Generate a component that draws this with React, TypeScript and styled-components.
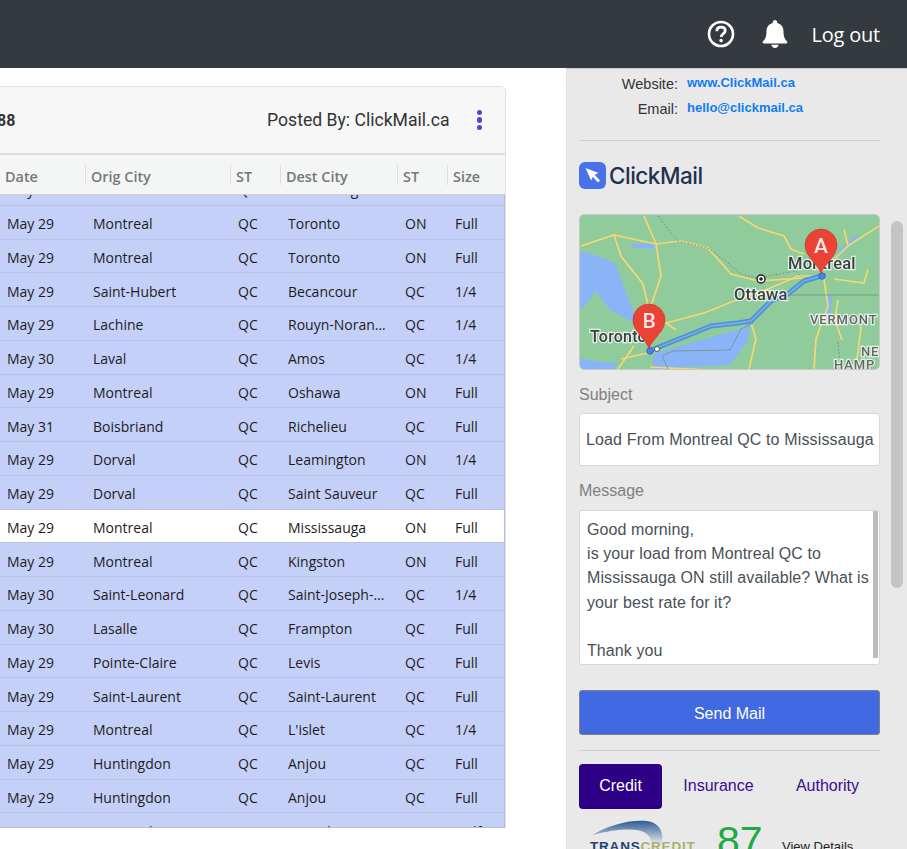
import React from 'react';
import styled, { createGlobalStyle } from 'styled-components';

const Global = createGlobalStyle`
  html, body { margin: 0; padding: 0; background: #fff; overflow: hidden; height: 849px; }
  * { box-sizing: border-box; }
`;
const Page = styled.div`
  width: 907px; height: 849px; overflow: hidden; display: flex; flex-direction: column;
  font-family: Roboto, "Noto Sans", sans-serif;
`;
const TopBar = styled.header`
  height: 68px; flex: none; background: #343a40; display: flex; align-items: center; justify-content: flex-end;
  padding-right: 27px; color: #fff;
`;
const IconSlot = styled.div<{ $gap: number }>`
  display: flex; margin-right: ${p => p.$gap}px;
`;
const LogOut = styled.span`
  font: 400 20px "Open Sans", sans-serif; letter-spacing: -0.2px;
`;
const Body = styled.div`
  flex: 1; display: flex; min-height: 0;
`;
const Main = styled.main`
  width: 566px; flex: none; overflow: hidden; padding-top: 18px;
`;
const Card = styled.section`
  width: 506px; height: 742px; display: flex; flex-direction: column; overflow: hidden;
  border: 1px solid #dfe1ee; border-left: none; border-bottom: none; border-radius: 0 6px 0 0;
`;
const CardHead = styled.div`
  height: 68px; flex: none; background: #f7f7f7; display: flex; align-items: center; justify-content: space-between;
  border-bottom: 2px solid #dcdcdc; padding-right: 23px;
`;
const LoadNo = styled.b`
  font: 700 16px Roboto, sans-serif; color: #333; margin-left: -3px;
`;
const Posted = styled.div`
  display: flex; align-items: center; gap: 27px; font-size: 17.6px; color: #333;
`;
const Dots = styled.span`
  display: flex; flex-direction: column; gap: 2px;
  i { width: 5.5px; height: 5.5px; background: #5b3fd6; border-radius: 50%; display: block; }
`;
const Grid = `display: grid; grid-template-columns: 85px 145px 50px 117px 50px 1fr;`;
const HeadRow = styled.div`
  ${Grid}
  height: 40px; flex: none; background: #f4f6f5; border-bottom: 1px solid #cfd2d3; align-items: center;
  font: 600 14.4px "Open Sans", sans-serif; color: #777;
`;
const HeadCell = styled.div`
  height: 20px; line-height: 24px; padding-left: 5px; border-left: 1px solid #dcdedd; white-space: nowrap;
  &:first-child { border-left: none; }
`;
const Rows = styled.div`
  flex: 1; overflow: hidden; border-right: 1px solid #b5bcd0; border-bottom: 1px solid #b5bcd0;
`;
const RowList = styled.div`
  margin-top: -23px;
`;
const Row = styled.div<{ $on?: boolean }>`
  ${Grid}
  height: 33.75px; align-items: center; background: ${p => (p.$on ? '#ffffff' : '#c5d0f9')};
  border-bottom: 1px solid #b9c3e4;
  font: 400 14px "Open Sans", sans-serif; color: #1c1c1c;
`;
const Cell = styled.div`
  padding: 3px 8px 0 8px; white-space: nowrap; overflow: hidden; text-overflow: ellipsis;
  &:first-child { padding-left: 7px; }
`;
const Side = styled.aside`
  position: relative; flex: 1; background: #e9e9e9; overflow: hidden; padding: 0 27px 0 12px;
  border-top: 1px solid #c9c9c9; border-left: 1px solid #e4e4e4; font-family: "Liberation Sans", Arial, sans-serif;
`;
const Contact = styled.div`
  display: grid; grid-template-columns: 99px 1fr; column-gap: 9px; row-gap: 7px; padding-top: 6px; height: 72px;
  border-bottom: 1px solid #d2d2d2; align-content: start;
`;
const CLabel = styled.div`
  font-size: 14.5px; line-height: 18px; text-align: right; color: #333;
`;
const CLink = styled.a`
  font-size: 13px; font-weight: 700; line-height: 16px; color: #0f7cf4;
`;
const Brand = styled.div`
  display: flex; align-items: center; height: 73px; gap: 3px; padding-bottom: 5px;
`;
const BrandName = styled.span`
  font: 500 22.5px Inter, Roboto, sans-serif; color: #22304f; letter-spacing: -0.5px;
`;
const MapBox = styled.div`
  height: 156px; border: 1px solid #c8c8c8; border-radius: 5px; overflow: hidden;
  svg { display: block; filter: blur(0.45px); }
`;
const FieldLabel = styled.label<{ $top: number; $bottom: number }>`
  display: block; font-size: 16px; line-height: 18px; color: #808080;
  margin: ${p => p.$top}px 0 ${p => p.$bottom}px;
`;
const Subject = styled.div`
  height: 53px; background: #fff; border: 1px solid #d9d9d9; border-radius: 3px; display: flex; align-items: center;
  padding-left: 6px; font-size: 16px; letter-spacing: 0.14px; color: #495057; white-space: nowrap; overflow: hidden;
`;
const Message = styled.div`
  position: relative; height: 155px; background: #fff; border: 1px solid #d9d9d9; border-radius: 3px; padding: 7px 7px;
  font-size: 16px; letter-spacing: 0.09px; line-height: 24.2px; color: #495057; overflow: hidden;
`;
const MsgScroll = styled.div`
  position: absolute; right: 1px; top: 0; width: 5px; height: 147px; background: #bdbdbd;
`;
const Send = styled.button`
  display: block; width: 100%; height: 45px; margin-top: 25px; padding: 2px 0 0; background: #4169e1; color: #fff; border: 1px solid #808080;
  border-radius: 3px; font: 400 16px "Liberation Sans", Arial, sans-serif;
`;
const Rule = styled.hr`
  border: 0; border-top: 1px solid #d2d2d2; margin: 15px 0 13px;
`;
const Tabs = styled.div`
  display: grid; grid-template-columns: 83px 113px 1fr;
`;
const Tab = styled.div<{ $on?: boolean }>`
  height: 45px; padding-bottom: 2px; border-radius: 4px; display: flex; align-items: center; justify-content: center; font-size: 16px;
  background: ${p => (p.$on ? '#2e0085' : 'transparent')}; color: ${p => (p.$on ? '#fff' : '#3d0a94')};
`;
const Scores = styled.div`
  display: flex; align-items: flex-start; margin-top: 11px; height: 60px;
`;
const Score = styled.div`
  font-size: 41px; line-height: 45px; color: #22a845; margin: -1px 0 0 18px; width: 65px;
`;
const Details = styled.div`
  font-size: 13px; margin-top: 19px; color: #222;
`;
const Thumb = styled.div`
  position: absolute; right: 4px; top: 152px; width: 12px; height: 367px; background: #c4c4c4; border-radius: 6px;
`;

const rows: [string, string, string, string, string, string, boolean?][] = [
  ['May 29', 'Montreal', 'QC', 'Mississauga', 'ON', '1/4'],
  ['May 29', 'Montreal', 'QC', 'Toronto', 'ON', 'Full'],
  ['May 29', 'Montreal', 'QC', 'Toronto', 'ON', 'Full'],
  ['May 29', 'Saint-Hubert', 'QC', 'Becancour', 'QC', '1/4'],
  ['May 29', 'Lachine', 'QC', 'Rouyn-Noranda', 'QC', '1/4'],
  ['May 30', 'Laval', 'QC', 'Amos', 'QC', '1/4'],
  ['May 29', 'Montreal', 'QC', 'Oshawa', 'ON', 'Full'],
  ['May 31', 'Boisbriand', 'QC', 'Richelieu', 'QC', 'Full'],
  ['May 29', 'Dorval', 'QC', 'Leamington', 'ON', '1/4'],
  ['May 29', 'Dorval', 'QC', 'Saint Sauveur', 'QC', 'Full'],
  ['May 29', 'Montreal', 'QC', 'Mississauga', 'ON', 'Full', true],
  ['May 29', 'Montreal', 'QC', 'Kingston', 'ON', 'Full'],
  ['May 30', 'Saint-Leonard', 'QC', 'Saint-Joseph-de-Beauce', 'QC', '1/4'],
  ['May 30', 'Lasalle', 'QC', 'Frampton', 'QC', 'Full'],
  ['May 29', 'Pointe-Claire', 'QC', 'Levis', 'QC', 'Full'],
  ['May 29', 'Saint-Laurent', 'QC', 'Saint-Laurent', 'QC', 'Full'],
  ['May 29', 'Montreal', 'QC', "L'islet", 'QC', '1/4'],
  ['May 29', 'Huntingdon', 'QC', 'Anjou', 'QC', 'Full'],
  ['May 29', 'Huntingdon', 'QC', 'Anjou', 'QC', 'Full'],
  ['May 30', 'Montreal', 'QC', 'Dorval', 'ON', 'Half'],
];

const Help = () => (
  <svg width="28" height="28" viewBox="0 0 28 28" fill="none">
    <circle cx="14" cy="14" r="12" stroke="#fff" strokeWidth="2.6" />
    <path d="M9.8 11.2c0-2.6 1.9-4 4.3-4s4.1 1.4 4.1 3.6c0 3.3-4 3-4 6.2" stroke="#fff" strokeWidth="2.8" />
    <circle cx="14.1" cy="20.6" r="1.8" fill="#fff" />
  </svg>
);
const Bell = () => (
  <svg width="26" height="28" viewBox="0 0 26 28">
    <path fill="#fff" d="M13 0c-1.3 0-2.2 1-2.2 2.2v.9C6.600 4 4.500 7.500 4.500 11.500c0 5.500-1.500 7.800-3.500 9.800-.8.800-.3 2.200 1 2.200h22c1.300 0 1.800-1.400 1-2.200-2-2-3.500-4.300-3.500-9.800 0-4-2.100-7.500-6.300-8.400v-.9C15.200 1 14.300 0 13 0z" />
    <path fill="#fff" d="M9.500 24.800h7C16.500 26.700 15 28 13 28s-3.500-1.300-3.500-3.200z" />
  </svg>
);
const Logo = () => (
  <svg width="27" height="27" viewBox="0 0 27 27">
    <rect width="27" height="27" rx="6" fill="#4a72e8" />
    <path d="M6.500 6l13 5-5 2.200-2.400 5.300z" fill="#fff" />
    <path d="M13.500 12.500l6.500 7" stroke="#fff" strokeWidth="2.600" />
  </svg>
);
const Pin = ({ x, y, l }: { x: number; y: number; l: string }) => (
  <g transform={`translate(${x} ${y})`}>
    <path d="M0 0c-2-9-16-17-16-29a16 16 0 0 1 32 0C16-17 2-9 0 0z" fill="#ea4335" stroke="#c5362c" strokeWidth="0.6" />
    <text x="0" y="-21" textAnchor="middle" fontFamily="Roboto, sans-serif" fontSize="21" fontWeight="500" fill="#fde8e4">{l}</text>
  </g>
);
const Label = ({ x, y, t, s = 16.5, f = '#3c4043', ls = 0.2 }: { x: number; y: number; t: string; s?: number; f?: string; ls?: number }) => (
  <text x={x} y={y} fontFamily="Roboto, sans-serif" fontSize={s} fontWeight="500" fill={f} stroke="#fff" strokeWidth="2.5" strokeOpacity="0.75" paintOrder="stroke" letterSpacing={ls}>{t}</text>
);
const roads = [
  'M1 31L34 20 76 29 101 26 128 33 151 59 178 66',
  'M34 20L41 41 63 69 69 94',
  'M76 29L81 61 71 91',
  'M64 1L76 29',
  'M159 1L178 13 204 21 211 34 224 39',
  'M264 14L268 31 299 11',
  'M268 31L240 58',
  'M86 108L124 98 154 86 188 74 218 61 241 61',
  'M244 64L248 91 236 124 234 154',
  'M254 64L284 68 288 54',
  'M258 85L255 105 262 125',
  'M171 108L176 124 169 154',
  'M68 138L41 144',
  'M54 131L38 154',
  'M281 111L278 138 274 154',
  'M178 66L224 63',
  'M70 152L130 155',
  'M69 94L80 120',
  'M96 115L86 108 74 112',
];
const MapArt = () => (
  <svg width="300" height="155" viewBox="0 0 300 155">
    <rect width="300" height="155" fill="#8fcb9b" />
    <path d="M0 36l15 4 20 8 10 27 10 25 0 8-25-13-15-20-5 10-10 10z" fill="#8ab4f8" />
    <path d="M0 143l14 3 24 2-6 7H0z" fill="#8ab4f8" />
    <path d="M75 138L160 114l10-6-2 17-18 25-60 3-10 2-8-5z" fill="#8ab4f8" />
    <path d="M51 28l23 1 0 5-20-1z" fill="#8ab4f8" />
    <path d="M258 38l20-17" stroke="#8ab4f8" strokeWidth="3" fill="none" />
    <path d="M250 81l-2 23" stroke="#8ab4f8" strokeWidth="4" fill="none" />
    {roads.map((d, i) => <path key={i} d={d} stroke="#f6d773" strokeWidth="1.700" fill="none" />)}
    <path d="M78 1L98 26 128 33 148 48 161 59 178 63M182 62l34-6 6 6M258 127l3 27" stroke="#6b7d75" strokeWidth="0.800" strokeDasharray="1.500 2" fill="none" />
    <path d="M211 80h88M173 108l-12 6-11 21-57 1-11 5 6 13" stroke="#7b8a8a" strokeWidth="0.800" fill="none" />
    <path d="M241 61L224 66 208 79 191 86 171 106 158 108 131 111 104 122 69 136" stroke="#4d90d8" strokeWidth="5" fill="none" strokeLinejoin="round" />
    <path d="M241 61L224 66 208 79 191 86 171 106 158 108 131 111 104 122 69 136" stroke="#74aee8" strokeWidth="1.800" fill="none" />
    <circle cx="181" cy="64" r="4" fill="#fff" stroke="#222" strokeWidth="1.500" /><circle cx="181" cy="64" r="1.800" fill="#222" />
    <circle cx="77" cy="134" r="2.500" fill="#fff" stroke="#555" />
    <Label x={154} y={85} t="Ottawa" />
    <Label x={208} y={54} t="Montreal" />
    <Label x={10} y={127} t="Toronto" s={16} />
    <Label x={230} y={109} t="VERMONT" s={13} f="#666" ls={0.9} />
    <Label x={281} y={141} t="NE" s={13} f="#666" ls={0.9} />
    <Label x={254} y={154} t="HAMP" s={13} f="#666" ls={0.9} />
    <circle cx="242" cy="61" r="3.200" fill="#4285f4" stroke="#2a6ac0" />
    <circle cx="70" cy="136" r="3.200" fill="#4285f4" stroke="#2a6ac0" />
    <Pin x={241} y={59} l="A" />
    <Pin x={69} y={134} l="B" />
  </svg>
);
const TransCredit = () => (
  <svg width="120" height="30" viewBox="0 0 120 30">
    <defs>
      <linearGradient id="sw" x1="0" x2="0" y1="0" y2="1"><stop offset="0" stopColor="#2d5a94" /><stop offset="1" stopColor="#dfe4e8" /></linearGradient>
    </defs>
    <path d="M13 15C28 6 50-1 68 1c12 2 17 10 15 22H72C72 8 50 6 13 15z" fill="url(#sw)" />
    <text x="11" y="31" fontFamily="'Liberation Sans', sans-serif" fontWeight="700" fontSize="13.500" letterSpacing="0.800" fill="#1f4271">TRANS<tspan fill="#a9b070">CREDIT</tspan></text>
  </svg>
);

export default function App() {
  return (
    <Page>
      <Global />
      <TopBar>
        <IconSlot $gap={27}><Help /></IconSlot>
        <IconSlot $gap={23}><Bell /></IconSlot>
        <LogOut>Log out</LogOut>
      </TopBar>
      <Body>
        <Main>
          <Card>
            <CardHead>
              <LoadNo>88</LoadNo>
              <Posted>Posted By: ClickMail.ca <Dots><i /><i /><i /></Dots></Posted>
            </CardHead>
            <HeadRow>
              {['Date', 'Orig City', 'ST', 'Dest City', 'ST', 'Size'].map((h, i) => <HeadCell key={i}>{h}</HeadCell>)}
            </HeadRow>
            <Rows>
              <RowList>
                {rows.map((r, i) => (
                  <Row key={i} $on={r[6]}>
                    {r.slice(0, 6).map((c, j) => <Cell key={j}>{c as string}</Cell>)}
                  </Row>
                ))}
              </RowList>
            </Rows>
          </Card>
        </Main>
        <Side>
          <Contact>
            <CLabel>Website:</CLabel><CLink>www.ClickMail.ca</CLink>
            <CLabel>Email:</CLabel><CLink>hello@clickmail.ca</CLink>
          </Contact>
          <Brand><Logo /><BrandName>ClickMail</BrandName></Brand>
          <MapBox><MapArt /></MapBox>
          <FieldLabel $top={16} $bottom={9}>Subject</FieldLabel>
          <Subject>Load From Montreal QC to Mississauga</Subject>
          <FieldLabel $top={16} $bottom={10}>Message</FieldLabel>
          <Message>
            Good morning,<br />is your load from Montreal QC to Mississauga ON still available? What is your best rate for it?<br /><br />Thank you
            <MsgScroll />
          </Message>
          <Send>Send Mail</Send>
          <Rule />
          <Tabs>
            <Tab $on>Credit</Tab><Tab>Insurance</Tab><Tab>Authority</Tab>
          </Tabs>
          <Scores>
            <TransCredit />
            <Score>87</Score>
            <Details>View Details</Details>
          </Scores>
          <Thumb />
        </Side>
      </Body>
    </Page>
  );
}
